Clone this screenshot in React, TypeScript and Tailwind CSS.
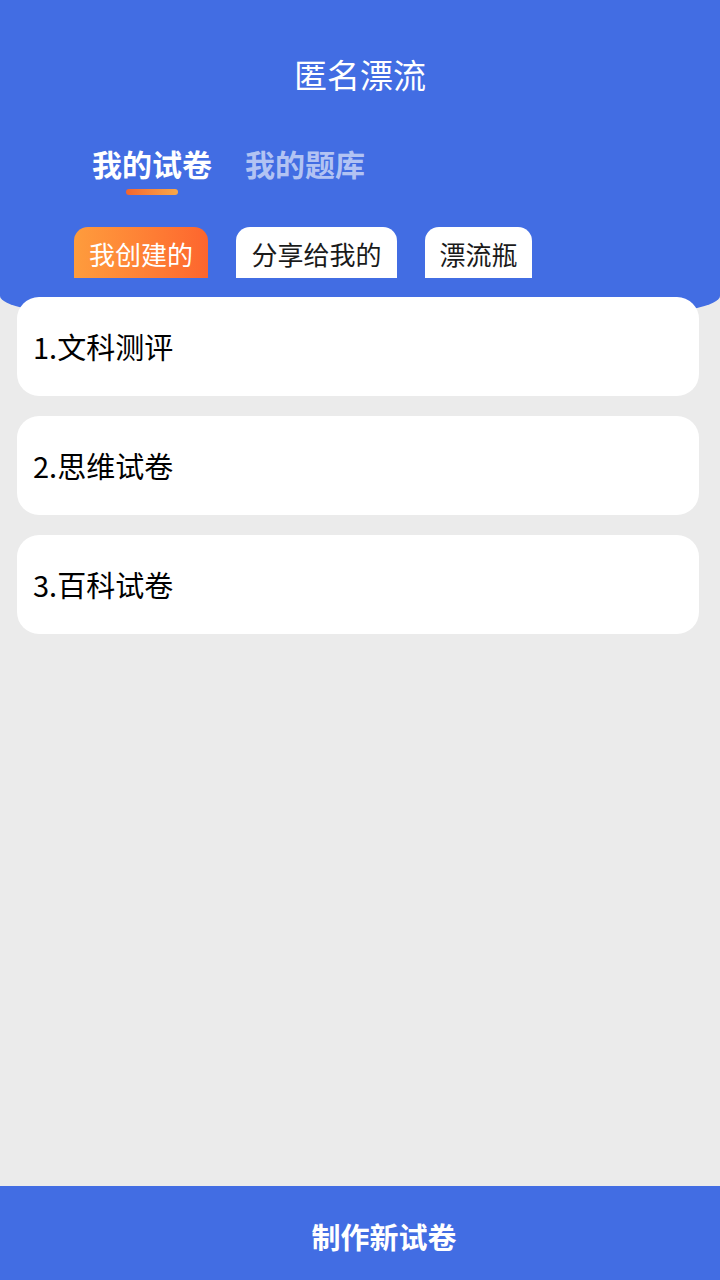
import React from "react";

const font = { fontFamily: '"Noto Sans CJK SC", "Noto Sans", sans-serif' };

export default function App() {
  const items = ["1.文科测评", "2.思维试卷", "3.百科试卷"];
  return (
    <div className="w-[720px] h-[1280px] bg-[#ebebeb] flex flex-col overflow-hidden" style={font}>
      <div className="bg-[#426de3] h-[330px] rounded-bl-[50%_34px] rounded-br-[50%_34px] flex flex-col shrink-0">
        <div className="h-[148px] flex items-center justify-center">
          <span className="text-white text-[33px] leading-none">匿名漂流</span>
        </div>
        <div className="flex items-start pl-[92px] gap-[33px] h-[86px] -mt-[7px]">
          <div className="flex flex-col items-center">
            <span className="text-white text-[30px] font-bold leading-[44px]">我的试卷</span>
            <div className="mt-[4px] w-[52px] h-[6px] rounded-full bg-gradient-to-r from-[#f3642f] to-[#f8a84a]" />
          </div>
          <span className="text-white/60 text-[30px] font-bold leading-[44px]">我的题库</span>
        </div>
        <div className="flex pl-[74px] gap-[28px]">
          <div className="h-[51px] w-[134px] rounded-t-[14px] bg-gradient-to-r from-[#fe9c3d] to-[#fd652e] flex items-center justify-center text-white text-[26px] pt-[2px]">我创建的</div>
          <div className="h-[51px] w-[161px] rounded-t-[14px] bg-white flex items-center justify-center text-[#1a1a1a] text-[26px] pt-[2px]">分享给我的</div>
          <div className="h-[51px] w-[107px] rounded-t-[14px] bg-white flex items-center justify-center text-[#1a1a1a] text-[26px] pt-[2px]">漂流瓶</div>
        </div>
      </div>
      <div className="flex flex-col gap-[20px] pl-[17px] pr-[21px] -mt-[33px] relative">
        {items.map((t) => (
          <div key={t} className="h-[99px] bg-white rounded-[22px] flex items-center pl-[16px] text-[29px] text-black">
            {t}
          </div>
        ))}
      </div>
      <div className="flex-1" />
      <div className="h-[94px] bg-[#426de3] flex items-center justify-center pl-12 pt-2 shrink-0">
        <span className="text-white text-[29px] font-bold">制作新试卷</span>
      </div>
    </div>
  );
}
